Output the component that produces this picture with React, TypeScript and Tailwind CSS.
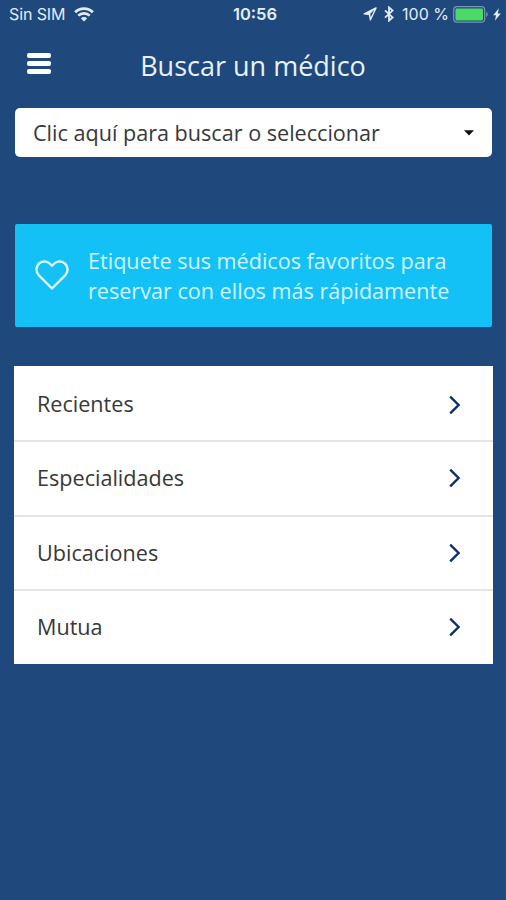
const CATEGORIES = [
  { id: "recent", label: "Recientes" },
  { id: "specialties", label: "Especialidades" },
  { id: "locations", label: "Ubicaciones" },
  { id: "insurance", label: "Mutua" },
];

function WifiIcon() {
  return (
    <svg width="20" height="15" viewBox="0 0 20 15" fill="none" stroke="currentColor">
      <path d="M1.2 5.2a12.6 12.6 0 0 1 17.6 0" strokeWidth="2.9" />
      <path d="M4.3 8.7a8.1 8.1 0 0 1 11.4 0" strokeWidth="2.6" />
      <path d="M10 14.4 6.9 11.4a4.4 4.4 0 0 1 6.2 0z" fill="currentColor" stroke="none" />
    </svg>
  );
}

function LocationIcon() {
  return (
    <svg width="14" height="14" viewBox="0 0 14 14" fill="none" stroke="currentColor" strokeWidth="1.5">
      <path d="M13 1 1.2 6.8l5.4.8.8 5.2z" strokeLinejoin="round" />
      <path d="M13 1 1.2 6.8l5.4.8z" fill="currentColor" stroke="none" />
    </svg>
  );
}

function BluetoothIcon() {
  return (
    <svg width="10" height="16" viewBox="0 0 10 16" fill="none" stroke="currentColor" strokeWidth="1.8">
      <path d="m1 4.4 7.6 7L5 14.6V1.4l3.6 3.2-7.6 7" />
    </svg>
  );
}

function BatteryIcon() {
  return (
    <svg width="36" height="17" viewBox="0 0 36 17">
      <rect x="0.7" y="0.7" width="31" height="15.4" rx="3.2" fill="none" stroke="#7895bd" strokeWidth="1.2" />
      <rect x="2.4" y="2.4" width="27.6" height="12" rx="1.4" fill="#4cd964" />
      <path d="M33.2 5.8c2 .8 2 4.4 0 5.2z" fill="#7895bd" />
    </svg>
  );
}

function BoltIcon() {
  return (
    <svg width="8" height="13" viewBox="0 0 8 13" fill="currentColor">
      <path d="M5.9.2.2 7.3h2.9L1.9 12.8l5.9-7.4H4.8z" />
    </svg>
  );
}

function StatusBar() {
  return (
    <div className="grid h-7 grid-cols-[1fr_auto_1fr] items-center pr-[5px] pl-[9px] font-['Inter',sans-serif] text-[16px] leading-7 text-[#e3edf8]">
      <div className="flex items-center gap-[9px]">
        <span className="w-[56px] whitespace-nowrap tracking-[-0.1px]">Sin SIM</span>
        <WifiIcon />
      </div>
      <span className="text-[16.5px] font-semibold">10:56</span>
      <div className="flex items-center justify-end">
        <LocationIcon />
        <span className="ml-[7px]">
          <BluetoothIcon />
        </span>
        <span className="ml-2 whitespace-nowrap">100 %</span>
        <span className="ml-1">
          <BatteryIcon />
        </span>
        <span className="ml-1">
          <BoltIcon />
        </span>
      </div>
    </div>
  );
}

function Header() {
  return (
    <header className="grid h-20 grid-cols-[80px_1fr_80px] items-start">
      <button type="button" aria-label="Menú" className="mt-[25px] ml-[27px] flex w-6 flex-col gap-[3px]">
        <span className="h-[5px] w-full rounded-[2px] bg-white" />
        <span className="h-[5px] w-full rounded-[2px] bg-white" />
        <span className="h-[5px] w-full rounded-[2px] bg-white" />
      </button>
      <h1 className="mt-5 text-center text-[27px] leading-9 whitespace-nowrap text-[#e8f2fb]">
        Buscar un médico
      </h1>
    </header>
  );
}

function Chevron() {
  return (
    <svg width="14" height="20" viewBox="0 0 14 20" fill="none" stroke="#0e2f6d" strokeWidth="2.4">
      <path d="m2.2 1.6 8.4 8.4-8.4 8.4" />
    </svg>
  );
}

export default function App() {
  return (
    <div className="flex h-[900px] w-[506px] flex-col overflow-hidden bg-[#1f487c] font-['Open_Sans',sans-serif]">
      <StatusBar />
      <Header />

      <button
        type="button"
        className="mr-3.5 ml-[15px] flex h-[49px] shrink-0 items-center justify-between rounded-[5px] bg-white pr-[18px] pl-[18px] text-[21.6px] text-[#383838]"
      >
        <span className="pt-0.5 whitespace-nowrap">Clic aquí para buscar o seleccionar</span>
        <svg width="10" height="6" viewBox="0 0 10 6" fill="#111">
          <path d="M0 .3h10L5 5.6z" />
        </svg>
      </button>

      <div className="mt-[67px] mr-3.5 ml-[15px] flex h-[103px] shrink-0 items-center rounded-[2px] bg-[#14c1f7] pb-0.5 pl-5">
        <svg width="34" height="30" viewBox="0 0 34 30" fill="none" stroke="#e4faff" strokeWidth="2.3" strokeLinejoin="round">
          <path d="M17 28.5 3.9 15.4C.3 11.5.8 6 4.6 3.1c3.8-2.9 8.6-1.8 12.4 2.6 3.8-4.4 8.6-5.5 12.4-2.6 3.8 2.9 4.3 8.4.7 12.3z" />
        </svg>
        <p className="ml-[19px] pt-[3px] text-[21.6px] leading-[30px] whitespace-nowrap text-[#cff5ff]">
          Etiquete sus médicos favoritos para
          <br />
          reservar con ellos más rápidamente
        </p>
      </div>

      <ul className="mt-[39px] mr-[13px] ml-3.5 h-[298px] shrink-0 bg-white">
        {CATEGORIES.map((c) => (
          <li
            key={c.id}
            className="flex h-[74.6px] items-center justify-between border-t-2 border-[#e5e5e5] pr-[31px] pl-[23px] first:h-[74px] first:border-t-0 first:pt-[3px]"
          >
            <span className="text-[21.6px] text-[#383838]">{c.label}</span>
            <Chevron />
          </li>
        ))}
      </ul>
    </div>
  );
}
